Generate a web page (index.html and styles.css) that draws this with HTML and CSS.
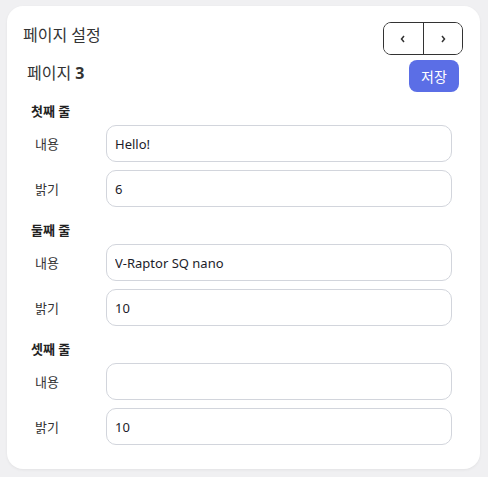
FILE: index.html
```html
<!DOCTYPE html>
<html>
<head>
    <title>페이지 설정</title>
    <link rel="stylesheet" href="styles.css">
</head>
<body>
    <div class="card">
        <!-- header -->
        <div class="top-row">
            <div class="title">페이지 설정</div>
            <div class="pager">
                <button class="pager-btn" type="button">
                    <svg width="8" height="10" viewBox="0 0 8 10"><path d="M 5 2 L 2.5 5 L 5 8" fill="none" stroke="#333" stroke-width="1.5"/></svg>
                </button>
                <button class="pager-btn" type="button">
                    <svg width="8" height="10" viewBox="0 0 8 10"><path d="M 3 2 L 5.5 5 L 3 8" fill="none" stroke="#333" stroke-width="1.5"/></svg>
                </button>
            </div>
        </div>

        <div class="page-row">
            <div class="page-name">페이지 <b>3</b></div>
            <button class="save-btn" type="button">저장</button>
        </div>

        <!-- lines -->
        <div class="section">
            <div class="section-title">첫째 줄</div>
            <div class="field">
                <label class="field-label">내용</label>
                <input class="field-input" type="text" value="Hello!">
            </div>
            <div class="field">
                <label class="field-label">밝기</label>
                <input class="field-input" type="text" value="6">
            </div>
        </div>

        <div class="section">
            <div class="section-title">둘째 줄</div>
            <div class="field">
                <label class="field-label">내용</label>
                <input class="field-input" type="text" value="V-Raptor SQ nano">
            </div>
            <div class="field">
                <label class="field-label">밝기</label>
                <input class="field-input" type="text" value="10">
            </div>
        </div>

        <div class="section">
            <div class="section-title">셋째 줄</div>
            <div class="field">
                <label class="field-label">내용</label>
                <input class="field-input" type="text" value="">
            </div>
            <div class="field">
                <label class="field-label">밝기</label>
                <input class="field-input" type="text" value="10">
            </div>
        </div>
    </div>
</body>
</html>
```

FILE: styles.css
```css
body {
    margin: 0;
    padding: 6px 8px 9px 7px;
    font-family: "Noto Sans", "Noto Sans CJK KR", sans-serif;
    background: #f0f0f2;
    color: #333;
}

.card {
    background: white;
    border-radius: 16px;
    padding: 16px 17px 24px 16px;
    box-shadow: 0 1px 3px rgba(0,0,0,0.06);
}

.top-row {
    display: flex;
    justify-content: space-between;
    align-items: flex-start;
}

.title {
    font-size: 16px;
    line-height: 24px;
    margin-top: 1px;
}

.pager {
    display: flex;
    width: 80px;
    height: 33px;
    border: 1px solid #333;
    border-radius: 8px;
    box-sizing: border-box;
    overflow: hidden;
}

.pager-btn {
    flex: 1;
    display: flex;
    align-items: center;
    justify-content: center;
    padding: 0;
    border: none;
    background: white;
}

.pager-btn + .pager-btn {
    border-left: 1px solid #333;
}

.page-row {
    display: flex;
    justify-content: space-between;
    align-items: center;
    height: 32px;
    margin-top: 5px;
    padding: 0 4px;
}

.page-name {
    font-size: 16px;
    line-height: 24px;
    margin-top: -6px;
}

.save-btn {
    width: 50px;
    height: 32px;
    border: none;
    border-radius: 8px;
    background: #5b6ee6;
    color: white;
    font-family: inherit;
    font-size: 14px;
    padding: 0;
}

.section {
    padding: 0 11px 0 8px;
    display: flex;
    flex-direction: column;
    gap: 8px;
}

.section-title {
    font-size: 13px;
    font-weight: bold;
    line-height: 18px;
    color: #222;
    margin: 14px 0 -3px;
}

.section:nth-child(3) .section-title {
    margin-top: 10px;
}

.field {
    display: grid;
    grid-template-columns: 71px 1fr;
    align-items: center;
    padding-left: 4px;
}

.field-label {
    font-size: 13px;
}

.field-input {
    height: 37px;
    box-sizing: border-box;
    border: 1px solid #d2d5dc;
    border-radius: 10px;
    padding: 0 8px;
    font-family: inherit;
    font-size: 13px;
    color: #1c1c2a;
    background: white;
}
```
